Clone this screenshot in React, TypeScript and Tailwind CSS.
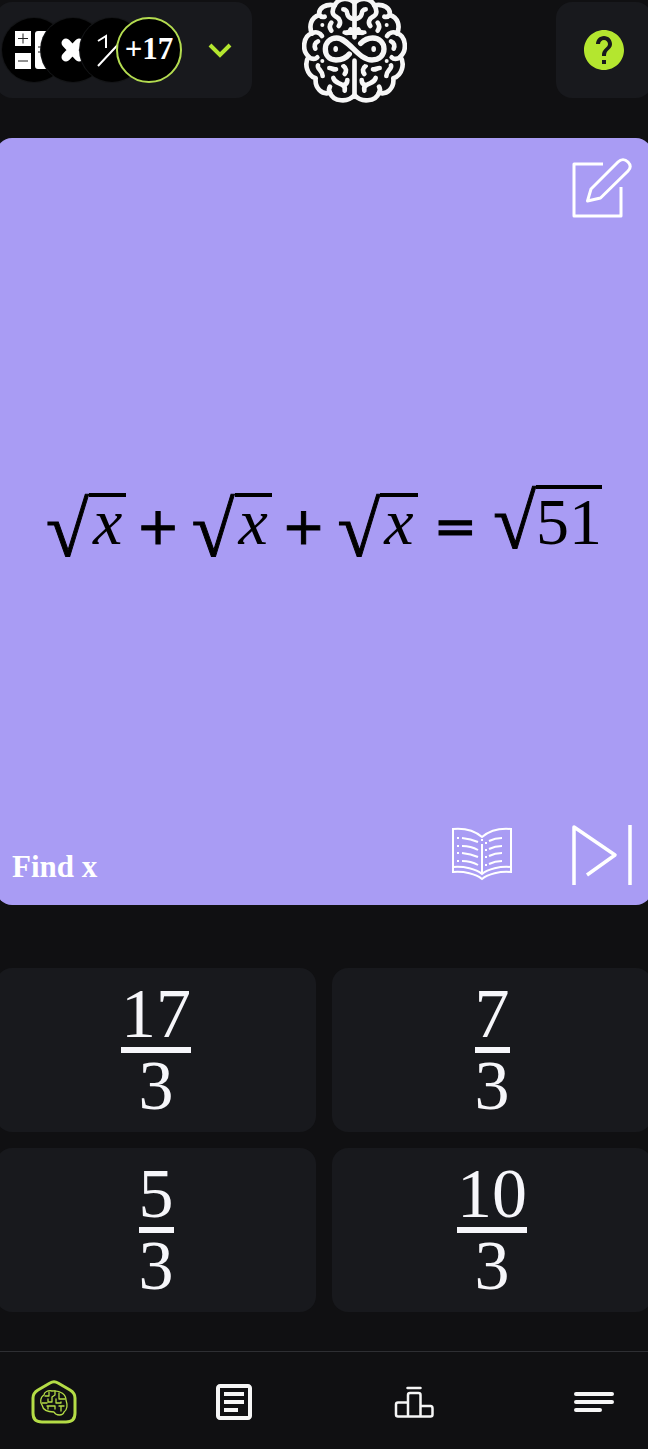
import { useState } from 'react';
import { MdHelp, MdOutlineArticle } from 'react-icons/md';

const answers = [
  { top: '17', bottom: '3' },
  { top: '7', bottom: '3' },
  { top: '5', bottom: '3' },
  { top: '10', bottom: '3' },
];

const circle = 'flex-shrink-0 size-16 rounded-full bg-black ring-1 ring-[#141517] overflow-hidden';

function BrainHalf() {
  return (
    <g>
      {/* Outer lobes */}
      <path d="M193 8C178 -8 146 -8 134 16C108 10 84 24 88 45C62 52 56 80 66 100" />
      <path d="M66 100C40 108 34 150 56 170C42 190 50 226 77 235C74 264 96 286 120 278C130 306 174 308 193 286" />
      {/* Folds */}
      <path d="M66 100C78 94 90 98 96 108" />
      <path d="M56 172C66 178 76 178 82 172" />
      <path d="M88 45C92 50 98 52 104 50" />
      <path d="M120 278C116 272 116 266 120 260" />
      <path d="M134 16C126 30 124 42 138 50C150 56 154 68 146 78" />
      <path d="M160 28C167 28 172 34 172 42C174 52 184 56 192 58" />
      <path d="M124 68C118 76 118 84 124 92" />
      <path d="M84 124C74 128 72 138 76 146" />
      <path d="M84 196C80 206 98 212 98 228" />
      <path d="M118 204C126 204 130 210 138 208" />
      <path d="M160 198C170 204 170 214 164 222" />
      <path d="M130 234C134 248 146 248 156 254C164 258 166 264 164 272" />
      <path d="M172 240C172 248 168 254 160 256" />
      <path d="M164 98C174 100 180 96 182 88" />
    </g>
  );
}

function BrainLogo() {
  return (
    <svg viewBox="36 0 315 312" className="w-[105px] h-[104px]" fill="none" stroke="#f6f6f6" strokeWidth="14" strokeLinecap="round" strokeLinejoin="round">
      <BrainHalf />
      <g transform="translate(387 0) scale(-1 1)">
        <BrainHalf />
      </g>
      <path d="M193.500 4V112M193.500 182V290M170 98H217" />
      <path d="M178 162C164 180 148 180 138 180C116 180 106 164 106 147C106 128 120 114 140 114C176 114 204 180 246 180C268 180 282 166 282 147C282 128 268 114 248 114C232 114 222 120 212 130" stroke="#101012" strokeWidth="32" />
      <path d="M178 162C164 180 148 180 138 180C116 180 106 164 106 147C106 128 120 114 140 114C176 114 204 180 246 180C268 180 282 166 282 147C282 128 268 114 248 114C232 114 222 120 212 130" strokeWidth="16" />
      <g fill="#f6f6f6" stroke="none">
        <circle cx="97" cy="75" r="6" />
        <circle cx="290" cy="75" r="6" />
        <circle cx="97" cy="183" r="6" />
        <circle cx="290" cy="183" r="6" />
        <ellipse cx="137" cy="147" rx="7" ry="9" />
        <ellipse cx="251" cy="147" rx="7" ry="9" />
      </g>
    </svg>
  );
}

function Topics() {
  return (
    <button aria-label="Choose topics" className="flex items-center w-64 h-24 pl-1.5 rounded-2xl bg-[#18191d]">
      <span className={circle}>
        <svg viewBox="0 0 64 64" className="size-16">
          <path fill="#fff" d="M13 13h16v15H13zM13 35h16v16H13zM36 13h14v38H36q-3 0-3-3V16q0-3 3-3z" />
          <path stroke="#222" strokeWidth="1" d="M16 20.500h10M21 15.500v10M16 43h10M36 29h4M36 34h4" />
        </svg>
      </span>
      <span className={`${circle} -ml-[25px]`}>
        <svg viewBox="0 0 64 64" className="size-16" stroke="#fff" strokeWidth="9" strokeLinecap="round">
          <path d="M25 25L38 39M38 25L25 39" />
        </svg>
      </span>
      <span className={`${circle} -ml-[25px]`}>
        <svg viewBox="0 0 64 64" className="size-16" fill="none" stroke="#fff" strokeWidth="2">
          <path d="M18 23L26 18V30M18 48L46 18" />
        </svg>
      </span>
      <span className="flex flex-shrink-0 items-center justify-center -ml-7 size-[66px] pb-1 rounded-full border-2 border-[#b4dc50] bg-black text-white text-[31px] leading-none font-bold">
        +17
      </span>
      <svg viewBox="0 0 24 16" className="w-6 h-4 ml-[26px]" fill="none" stroke="#b4e62f" strokeWidth="4">
        <path d="M2 3L12 13L22 3" />
      </svg>
    </button>
  );
}

function RadicalSign() {
  return <span className="text-[78px] leading-[74px] font-bold [-webkit-text-stroke:1px_black]">√</span>;
}

function SqrtX() {
  return (
    <span className="flex items-start mt-2">
      <RadicalSign />
      <i className="px-1 border-t-4 border-black leading-[50px]">x</i>
    </span>
  );
}

function Plus() {
  return <span className="ml-2.5 mr-3 font-['DejaVu_Sans',sans-serif] text-[52px] leading-[82px] [-webkit-text-stroke:1px_black]">+</span>;
}

function Equation() {
  return (
    <div className="flex items-start pt-2 text-[66px] text-black">
      <SqrtX />
      <Plus />
      <SqrtX />
      <Plus />
      <SqrtX />
      <span className="mx-4 font-['DejaVu_Sans',sans-serif] text-[52px] leading-[82px] [-webkit-text-stroke:1px_black]">=</span>
      <span className="flex items-start">
        <RadicalSign />
        <span className="border-t-4 border-black leading-[66px]">51</span>
      </span>
    </div>
  );
}

function EditIcon() {
  return (
    <svg viewBox="0 0 60 60" className="size-[60px]" fill="none" stroke="#fff" strokeWidth="3" strokeLinejoin="round">
      <path d="M31 6H2V58H49V29" />
      <path d="M15.500 43L19 31L46 4C49 1 53 1 56 4C59 7 59 10 56 13L28.500 40Z" />
    </svg>
  );
}

function BookIcon() {
  return (
    <svg viewBox="0 0 60 54" className="w-[60px] h-[54px]" fill="none" stroke="#fff" strokeWidth="2">
      <path d="M1 2C12 1 23 4 30 10C37 4 48 1 59 2V45C48 44 36 47 30 52C24 47 12 44 1 45Z" />
      <path d="M1 40C12 39 24 42 30 47C36 42 48 39 59 40M30 17V47M30 12V14" />
      <path d="M10 11Q19 12 26 15M10 19Q19 19 26 23M10 26Q19 27 26 30M10 34Q19 34 26 38" />
      <path d="M50 11Q43 11 37 14M50 19Q43 19 37 22M50 26Q43 26 37 29M50 34Q43 34 37 37" />
      <path d="M5 11H7M5 19H7M5 26H7M5 34H7M34 15V17M34 22V24M34 29V31M34 37V39" />
    </svg>
  );
}

function SkipIcon() {
  return (
    <svg viewBox="0 0 60 60" className="size-[60px]" fill="none" stroke="#fff" strokeWidth="3.500" strokeLinejoin="round">
      <path d="M2 60V2L43 30L15 50M58 0V60" />
    </svg>
  );
}

function HomeIcon() {
  return (
    <svg viewBox="0 0 48 48" className="size-12" fill="none" stroke="#b4dc46" strokeLinecap="round" strokeLinejoin="round">
      <path strokeWidth="3" d="M20 5Q24 2.500 28 5L40 12Q45 15 45 20V35Q45 44 36 44H12Q3 44 3 35V20Q3 15 8 12Z" />
      <g strokeWidth="1.300">
        <path d="M22 13C18 12 14 14 14 17C10 19 10 25 12 27C13 32 18 34 24 34C26 38 33 38 34 34C38 31 37 25 36 22C36 17 31 12 22 13Z" />
        <path d="M19 14V18H15M25 13V17L22 19V24H18V21M29 15V21H35M26 21V25H31V24M12 25H17M17 28H25V31M29 28H34M31 28V33M18 28V31" />
      </g>
    </svg>
  );
}

function PodiumIcon() {
  return (
    <svg viewBox="0 0 48 48" className="size-12" fill="none" stroke="#f6f6f6" strokeWidth="2.500" strokeLinecap="round" strokeLinejoin="round">
      <path d="M17.500 10H30.500M18 38V17Q18 15 20 15H28.500Q30.500 15 30.500 17V38M18 24.500H8Q6 24.500 6 26.500V36.500Q6 38.500 8 38.500H40.500Q42.500 38.500 42.500 36.500V30.500Q42.500 28 40.500 28H31" />
    </svg>
  );
}

function MenuIcon() {
  return (
    <svg viewBox="0 0 48 48" className="size-12" stroke="#f6f6f6" strokeWidth="4" strokeLinecap="round">
      <path d="M6 16H42M6 24H42M6 32H30" />
    </svg>
  );
}

export default function App() {
  const [selected, setSelected] = useState<number | null>(null);

  return (
    <div className="min-h-screen overflow-x-hidden bg-[#101012] font-['Liberation_Serif',serif]">
      <div className="flex flex-col min-h-screen">
        {/* Header */}
        <header className="flex items-start -mx-1 pt-0.5">
          <Topics />
          <a href="#" aria-label="Home" className="-mt-0.5 ml-[50px]">
            <BrainLogo />
          </a>
          <button aria-label="Help" className="flex items-center justify-center size-24 ml-auto rounded-2xl bg-[#18191d] text-[#b4e62f]">
            <MdHelp size={48} />
          </button>
        </header>

        {/* Question */}
        <main className="flex flex-col flex-1 -mx-1 mt-[34px]">
          <section className="flex flex-col flex-1 justify-between py-5 px-4 rounded-2xl bg-[#a99cf4]">
            <button aria-label="Scratchpad" className="self-end mr-1">
              <EditIcon />
            </button>
            <div className="flex justify-center">
              <Equation />
            </div>
            <div className="flex items-end">
              <h1 className="text-[31px] leading-9 font-bold text-white">Find x</h1>
              <button aria-label="Explanation" className="ml-auto mb-1">
                <BookIcon />
              </button>
              <button aria-label="Skip" className="ml-[60px] mr-1">
                <SkipIcon />
              </button>
            </div>
          </section>

          {/* Answers */}
          <div className="grid grid-cols-2 gap-4 mt-[63px] mb-[39px]">
            {answers.map((a, i) => (
              <button
                key={i}
                onClick={() => setSelected(i)}
                aria-pressed={selected === i}
                className="flex items-center justify-center h-[164px] rounded-2xl bg-[#18191d] text-[#f6f6fa] text-[70px] leading-[66px]"
              >
                <span className="flex flex-col items-center">
                  <span className="border-b-6 border-[#f6f6fa]">{a.top}</span>
                  <span>{a.bottom}</span>
                </span>
              </button>
            ))}
          </div>
        </main>

        {/* Bottom Menu */}
        <nav className="flex justify-between items-start h-[98px] pt-[26px] px-[30px] border-t border-[#2e2f33] text-[#f6f6f6]">
          <a href="#" aria-label="Play"><HomeIcon /></a>
          <a href="#" aria-label="Articles"><MdOutlineArticle size={48} /></a>
          <a href="#" aria-label="Leaderboard"><PodiumIcon /></a>
          <a href="#" aria-label="Menu"><MenuIcon /></a>
        </nav>
      </div>
    </div>
  );
}
